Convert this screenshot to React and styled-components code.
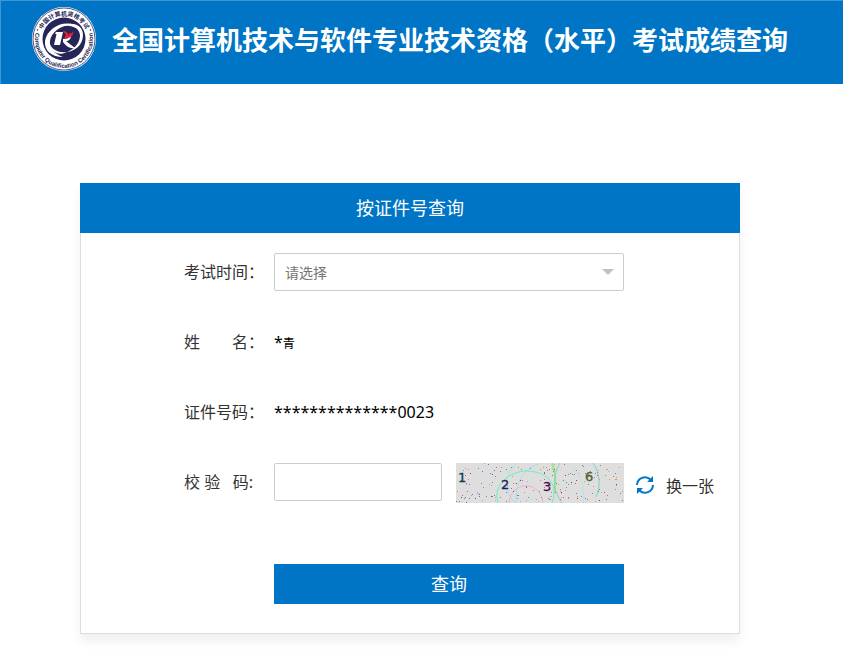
import React, { useState } from 'react';
import styled, { createGlobalStyle } from 'styled-components';

const BLUE = '#0075c5';

export default function App() {
    const [seed, setSeed] = useState(7);
    const [code, setCode] = useState('');

    return (
        <div lang="zh-CN">
            <GlobalStyle />
            <Header>
                <Logo />
                <h1>全国计算机技术与软件专业技术资格（水平）考试成绩查询</h1>
            </Header>

            <Main>
                <Card>
                    <CardTitle>按证件号查询</CardTitle>
                    <Form onSubmit={e => e.preventDefault()}>
                        <Row>
                            <Label as="label" htmlFor="examTime">考试时间：</Label>
                            <SelectBox>
                                <select id="examTime" defaultValue="">
                                    <option value="">请选择</option>
                                </select>
                            </SelectBox>
                        </Row>

                        <Row>
                            <Label><span>姓</span><span>名：</span></Label>
                            <Value>*<small>青</small></Value>
                        </Row>

                        <Row>
                            <Label>证件号码：</Label>
                            <Value>**************0023</Value>
                        </Row>

                        <Row>
                            <Label as="label" htmlFor="code" $end={11}><span>校&nbsp;验</span><span>码:</span></Label>
                            <CodeInput id="code" type="text" value={code} onChange={e => setCode(e.target.value)} />
                            <Captcha seed={seed} />
                            <Refresh type="button" onClick={() => setSeed(seed + 1)}>
                                <RefreshIcon />
                                换一张
                            </Refresh>
                        </Row>

                        <Submit type="submit">查询</Submit>
                    </Form>
                </Card>
            </Main>
        </div>
    );
}

function Logo() {
    return (
        <svg width="64" height="64" viewBox="0 0 64 64" role="img" aria-label="logo">
            <defs>
                <path id="ringTop" d="M8.500 32 A23.500 23.500 0 0 1 55.500 32" />
                <path id="ringBottom" d="M3.600 26 A29 29 0 1 0 60.400 26" />
            </defs>
            <circle cx="32" cy="32" r="32" fill="#fff" />
            <circle cx="32" cy="32" r="31" fill="none" stroke="#2a2d5e" strokeWidth="0.8" />
            <circle cx="32" cy="32" r="21.5" fill="#252557" />
            <g fill="#252557" fontWeight="bold">
                <text fontSize="6" fontFamily='"Noto Sans CJK SC", sans-serif' textAnchor="middle">
                    <textPath href="#ringTop" startOffset="50%">中国计算机资格考试</textPath>
                </text>
                <text fontSize="6" fontFamily='"Liberation Sans", sans-serif' textAnchor="middle">
                    <textPath href="#ringBottom" startOffset="50%">Computer Qualification Certification</textPath>
                </text>
            </g>
            <circle cx="5.500" cy="23" r="0.8" fill="#252557" />
            <circle cx="58.500" cy="23" r="0.8" fill="#252557" />
            <path d="M42 18 C30 13 15 22 13 34 C12 44 20 50 31 50 C23 47 17 42 18 34 C19 25 30 17 42 18 Z" fill="#fff" />
            <path d="M29 19 C41 14 51 18 51 28 C51 38 43 44 35 45 C44 41 48 35 48 28 C47 20 39 18 29 19 Z" fill="#fff" />
            <path d="M18 37 C20 43 27 46 35 45 C28 49 18 46 18 37 Z" fill="#fff" />
            <path d="M24 25 H31 L28 38 H22 L24.500 27 H23 Z" fill="#fff" />
            <path d="M31 32 C35 32 37 31 39 28 C39 32 37 34 34 34 L43 41 C38 42 34 39 31 35 Z" fill="#fff" />
            <path d="M31 24 C35 24 37 27 36 30 L31 32 C35 29 34 26 31 25 Z M36 25 C39 28 40 26 41 24 C42 29 38 31 33 32 C37 29 38 27 36 25 Z" fill="#e8232d" />
        </svg>
    );
}

const DOT_COLORS = ['#e0559b', '#4ab86c', '#4d7fd6', '#b03434', '#9a6fc8', '#ee8a8a', '#2aa5a5', '#d99a3d', '#cf9be0'];

function makeDots(seed) {
    const dots = [];
    let n = seed * 7919;
    const next = max => {
        n = (n * 16807) % 2147483647;
        return n % max;
    };
    for (let i = 0; i < 190; i++) {
        dots.push({ x: next(168), y: next(40), fill: DOT_COLORS[next(DOT_COLORS.length)] });
    }
    return dots;
}

function Captcha({ seed }) {
    return (
        <svg width="168" height="40" viewBox="0 0 168 40" role="img" aria-label="校验码">
            <rect width="168" height="40" fill="#dedede" />
            <g fill="none">
                <path d="M61 0 C50 10 45 24 59 40 M60 40 C59 22 66 5 83 1" stroke="#a9dfe8" />
                <path d="M42 40 C36 20 56 8 70 8 C92 8 103 22 96 40" stroke="#66f2bd" />
                <path d="M53 40 C55 17 85 17 87 40" stroke="#efb4cd" />
                <path d="M96 0 C101 12 99 25 98 30" stroke="#a8e27e" strokeWidth="2" />
                <path d="M104 0 C96 14 97 28 106 40 M137 0 C144 10 145 23 140 34" stroke="#7bd8bd" />
                <path d="M116 4 C125 12 129 24 127 40" stroke="#b5e5e5" />
            </g>
            {makeDots(seed).map((d, i) => (
                <rect key={i} x={d.x} y={d.y} width="1" height="1" fill={d.fill} />
            ))}
            <g fontFamily='"DejaVu Sans", sans-serif' fontSize="13" strokeWidth="0.3">
                <text x="2" y="19" fill="#0c3848" stroke="#0c3848">1</text>
                <text x="45" y="26" fill="#1f1d59" stroke="#1f1d59">2</text>
                <text x="87" y="28" fill="#550c4a" stroke="#550c4a">3</text>
                <text x="129" y="18" fill="#4a5f28" stroke="#4a5f28">6</text>
            </g>
        </svg>
    );
}

function RefreshIcon() {
    return (
        <svg width="18" height="18" viewBox="0 0 18 18" aria-hidden="true">
            <g fill="none" stroke={BLUE} strokeWidth="2">
                <path d="M1 9 A8 8 0 0 1 14.500 3.500" />
                <path d="M17 9 A8 8 0 0 1 3.500 14.500" />
            </g>
            <path d="M17 0 V6 H11 Z M1 18 V12 H7 Z" fill={BLUE} />
        </svg>
    );
}

const GlobalStyle = createGlobalStyle`
* {
    box-sizing: border-box;
}
body {
    margin: 0;
    background: #fff;
    color: #333;
    font-family: "Noto Sans", "Noto Sans CJK SC", sans-serif;
    font-size: 16px;
}
button, input, select {
    font-family: inherit;
}
`

const Header = styled.header`
    display: flex;
    align-items: flex-start;
    gap: 16px;
    min-height: 84px;
    padding: 6px 32px 0 31px;
    background: ${BLUE};
    border-top: 1px solid #3b96d3;
    border-left: 1px solid #3b96d3;

    svg {
        flex: none;
    }
    h1 {
        margin: 0;
        color: #fff;
        font-size: 26px;
        line-height: 66px;
        font-weight: bold;
        white-space: nowrap;
    }
`

const Main = styled.main`
    padding: 99px 103px 27px 80px;
`

const Card = styled.section`
    border: 1px solid #ddd;
    border-top: none;
    box-shadow: 0 8px 10px rgba(0, 0, 0, .06);
`

const CardTitle = styled.h2`
    margin: 0 -1px;
    background: ${BLUE};
    color: #fff;
    font-size: 18px;
    font-weight: normal;
    line-height: 50px;
    text-align: center;
`

const Form = styled.form`
    padding: 20px 24px 29px 103px;
`

const Row = styled.div`
    display: flex;
    align-items: flex-start;
    height: 38px;
    margin-bottom: 32px;
`

const Label = styled.div`
    display: flex;
    flex: none;
    justify-content: space-between;
    width: 80px;
    margin-right: 10px;
    padding-right: ${props => props.$end || 0}px;
    line-height: 38px;
`

const Value = styled.div`
    color: #000;
    line-height: 38px;

    small {
        font-size: 12px;
        line-height: 1;
    }
`

const SelectBox = styled.div`
    position: relative;
    width: 350px;

    select {
        display: block;
        width: 100%;
        height: 38px;
        padding: 0 30px 0 10px;
        border: 1px solid #ccc;
        border-radius: 2px;
        background: #fff;
        color: #757575;
        font-size: 14px;
        appearance: none;
    }
    &::after {
        content: "";
        position: absolute;
        top: 16px;
        right: 10px;
        border: 6px solid transparent;
        border-top-color: #c2c2c2;
        border-bottom: none;
        pointer-events: none;
    }
`

const CodeInput = styled.input`
    width: 168px;
    height: 38px;
    margin-right: 14px;
    padding: 0 10px;
    border: 1px solid #ccc;
    border-radius: 2px;
    font-size: 14px;
`

const Refresh = styled.button`
    display: flex;
    align-items: center;
    gap: 12px;
    height: 44px;
    margin-left: 12px;
    padding: 0;
    border: none;
    background: none;
    color: #333;
    font-size: 16px;
    white-space: nowrap;
    cursor: pointer;
`

const Submit = styled.button`
    display: block;
    width: 350px;
    height: 40px;
    margin: 63px 0 0 90px;
    padding: 0 0 2px;
    border: none;
    background: ${BLUE};
    color: #fff;
    font-size: 18px;
    cursor: pointer;
`
